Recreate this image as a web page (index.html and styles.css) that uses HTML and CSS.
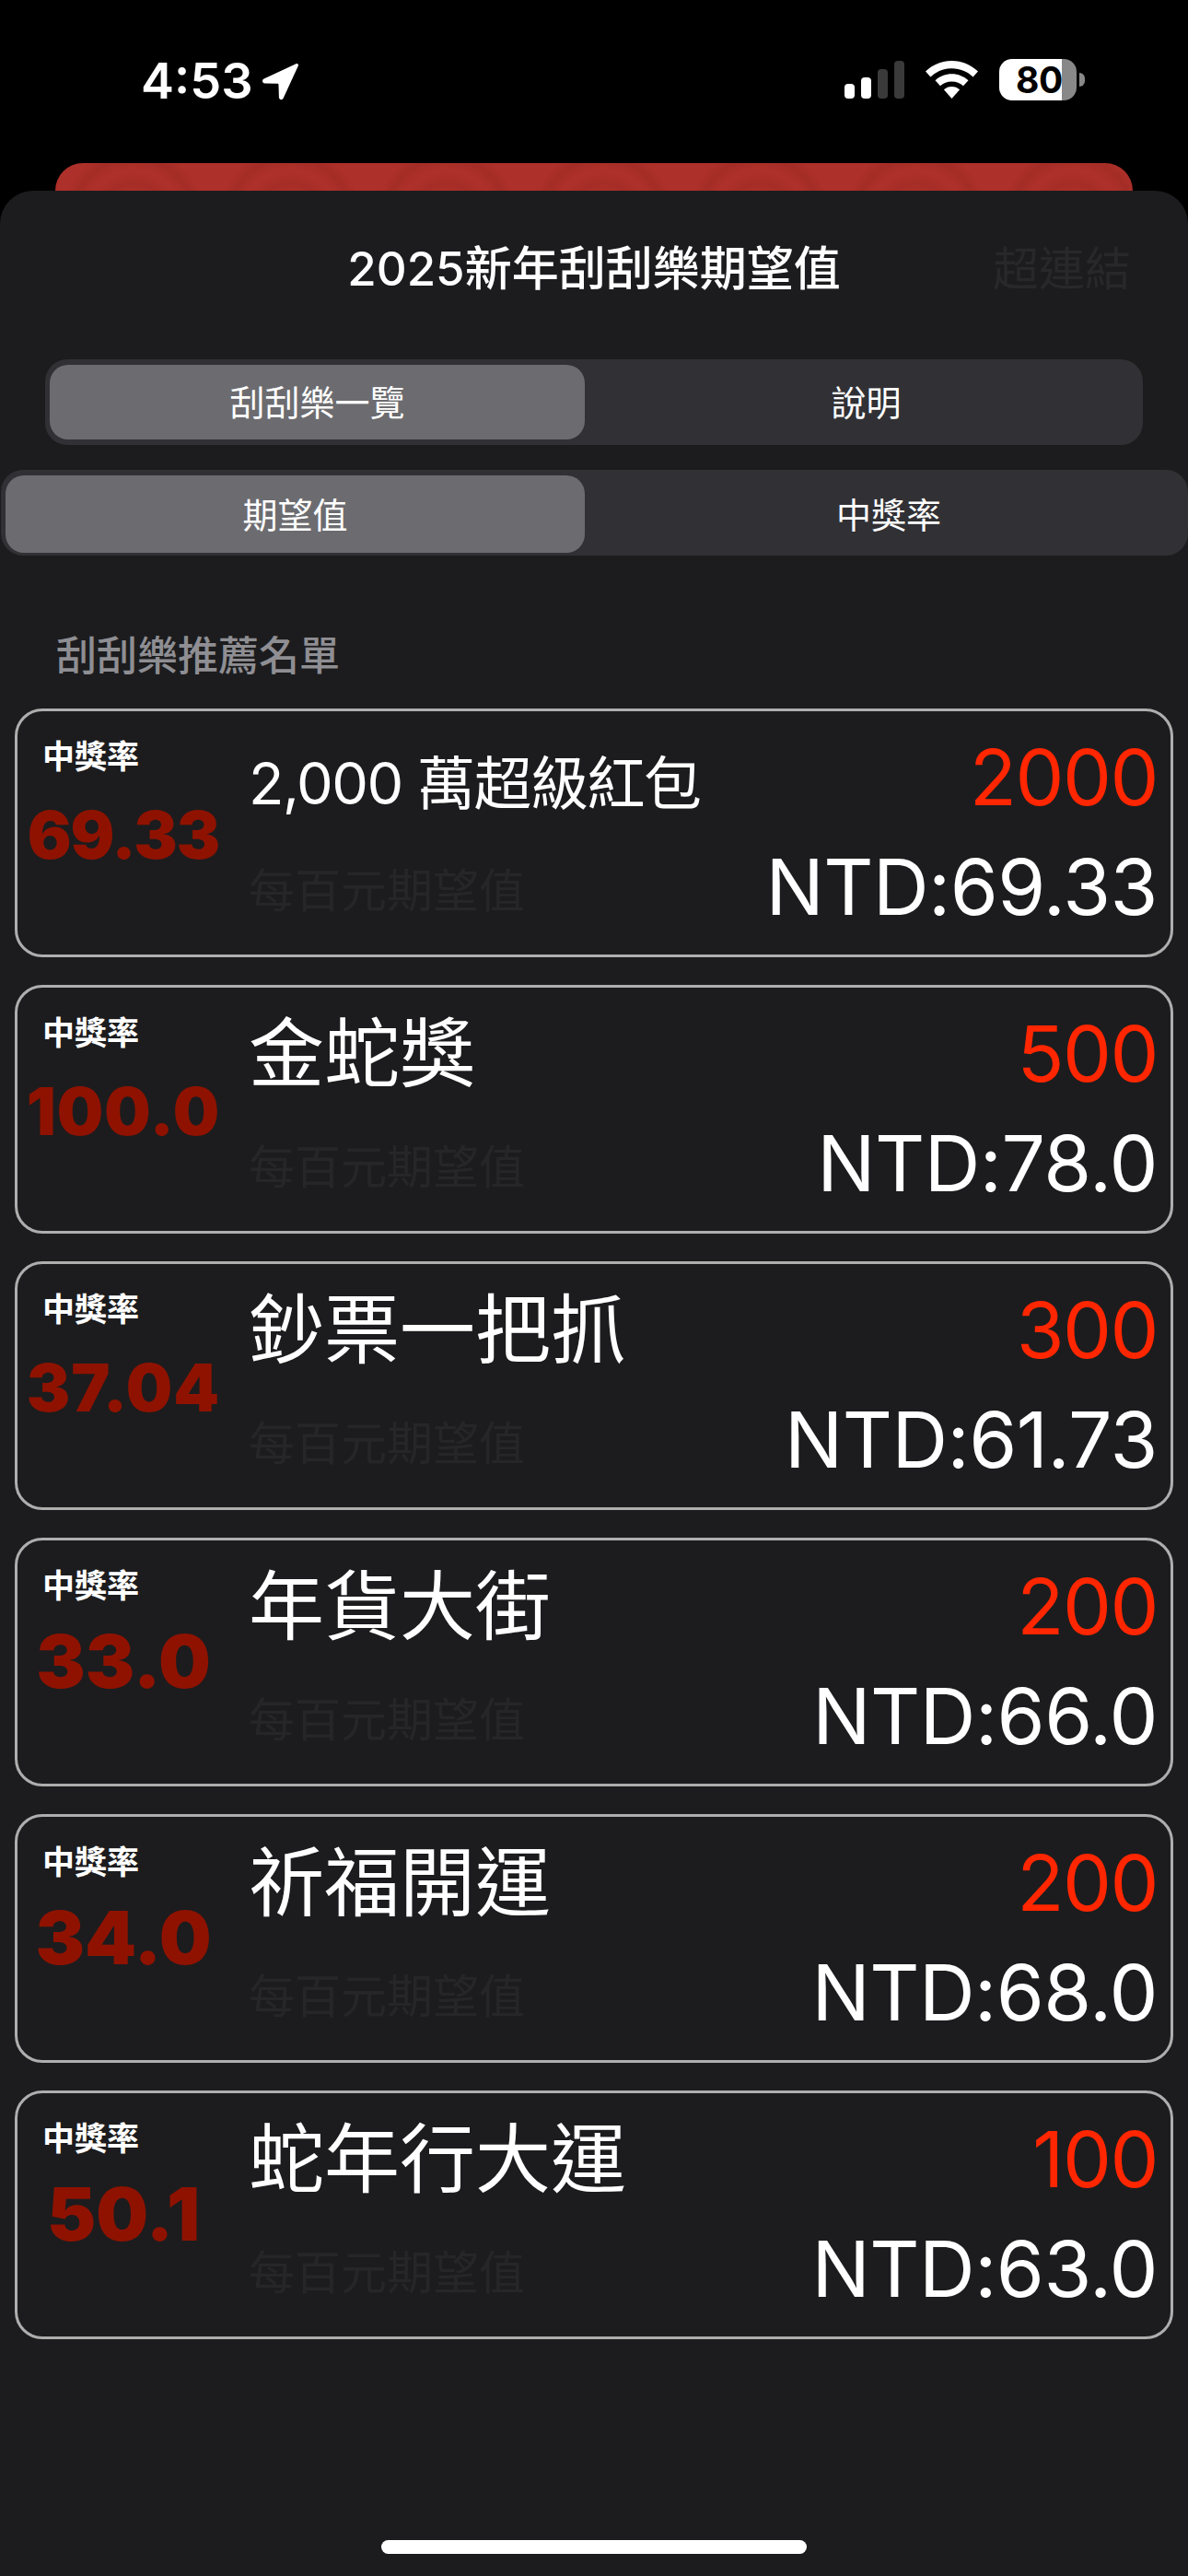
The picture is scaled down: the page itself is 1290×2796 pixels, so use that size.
FILE: index.html
```html
<!DOCTYPE html>
<html lang="zh-Hant">
<head>
  <meta charset="UTF-8">
  <meta name="viewport" content="width=device-width, initial-scale=1.0">
  <title>2025新年刮刮樂期望值</title>
  <link rel="stylesheet" href="styles.css">
</head>
<body>
  <div class="status-bar">
    <div class="status-left">
      <span class="time">4:53</span>
      <svg class="location" width="41" height="41" viewBox="0 0 41 41"><path d="M37.5 1.2 2.6 17.6c-2.6 1.300-1.800 4.800 1 4.900l13.600.3c.8 0 1.300.5 1.300 1.300l.4 13.500c.1 2.900 3.600 3.500 4.800 1L39.800 3.600c.7-1.600-.8-3.100-2.300-2.400z" fill="#fff"/></svg>
    </div>
    <div class="status-right">
      <div class="signal">
        <span class="bar bar-1"></span>
        <span class="bar bar-2"></span>
        <span class="bar bar-3 off"></span>
        <span class="bar bar-4 off"></span>
      </div>
      <svg class="wifi" width="57" height="41" viewBox="0 0 57 41"><path d="M28.500 0C17.500 0 7.700 4.300 0 11.500l5.400 6C11.500 11.800 19.500 8.300 28.500 8.300s17 3.500 23.100 9.200l5.400-6C49.300 4.300 39.500 0 28.500 0z" fill="#fff"/><path d="M28.500 14.200c-7 0-13.200 2.700-18 7l5.500 6.100c3.300-3 7.600-4.800 12.500-4.800s9.200 1.800 12.500 4.800l5.500-6.100c-4.800-4.300-11-7-18-7z" fill="#fff"/><path d="M28.500 28c-3.300 0-6.300 1.200-8.600 3.300L28.500 41l8.600-9.700C34.800 29.200 31.800 28 28.500 28z" fill="#fff"/></svg>
      <div class="battery">
        <div class="battery-body"><span class="battery-level">80</span></div>
        <span class="battery-nub"></span>
      </div>
    </div>
  </div>

  <div class="behind-card"></div>

  <div class="sheet">
    <div class="sheet-header">
      <span></span>
      <h1 class="sheet-title">2025新年刮刮樂期望值</h1>
      <span class="sheet-link">超連結</span>
    </div>

    <div class="segment segment-top">
      <div class="segment-item active">刮刮樂一覽</div>
      <div class="segment-item">說明</div>
    </div>

    <div class="segment segment-wide">
      <div class="segment-item active">期望值</div>
      <div class="segment-item">中獎率</div>
    </div>

    <div class="section-label">刮刮樂推薦名單</div>

    <div class="card-list">
      <div class="card">
        <div class="rate">
          <div class="rate-label">中獎率</div>
          <div class="rate-value">69.33</div>
        </div>
        <div class="info">
          <div class="name"><span class="name-small">2,000 萬超級紅包</span></div>
          <div class="hint">每百元期望值</div>
        </div>
        <div class="prices">
          <div class="price">2000</div>
          <div class="expect">NTD:69.33</div>
        </div>
      </div>

      <div class="card">
        <div class="rate">
          <div class="rate-label">中獎率</div>
          <div class="rate-value rate-spaced">100.0</div>
        </div>
        <div class="info">
          <div class="name">金蛇獎</div>
          <div class="hint">每百元期望值</div>
        </div>
        <div class="prices">
          <div class="price">500</div>
          <div class="expect">NTD:78.0</div>
        </div>
      </div>

      <div class="card">
        <div class="rate">
          <div class="rate-label">中獎率</div>
          <div class="rate-value rate-spaced">37.04</div>
        </div>
        <div class="info">
          <div class="name">鈔票一把抓</div>
          <div class="hint">每百元期望值</div>
        </div>
        <div class="prices">
          <div class="price">300</div>
          <div class="expect">NTD:61.73</div>
        </div>
      </div>

      <div class="card">
        <div class="rate">
          <div class="rate-label">中獎率</div>
          <div class="rate-value rate-big">33.0</div>
        </div>
        <div class="info">
          <div class="name">年貨大街</div>
          <div class="hint">每百元期望值</div>
        </div>
        <div class="prices">
          <div class="price">200</div>
          <div class="expect">NTD:66.0</div>
        </div>
      </div>

      <div class="card">
        <div class="rate">
          <div class="rate-label">中獎率</div>
          <div class="rate-value rate-big">34.0</div>
        </div>
        <div class="info">
          <div class="name">祈福開運</div>
          <div class="hint">每百元期望值</div>
        </div>
        <div class="prices">
          <div class="price">200</div>
          <div class="expect">NTD:68.0</div>
        </div>
      </div>

      <div class="card">
        <div class="rate">
          <div class="rate-label">中獎率</div>
          <div class="rate-value rate-big">50.1</div>
        </div>
        <div class="info">
          <div class="name">蛇年行大運</div>
          <div class="hint">每百元期望值</div>
        </div>
        <div class="prices">
          <div class="price">100</div>
          <div class="expect">NTD:63.0</div>
        </div>
      </div>
    </div>

    <div class="home-bar"></div>
  </div>
</body>
</html>
```

FILE: styles.css
```css
* {
  box-sizing: border-box;
}

html,
body {
  margin: 0;
  background-color: #000;
}

body {
  width: 1290px;
  height: 2796px;
  display: flex;
  flex-direction: column;
  overflow: hidden;
  color: #fff;
  font-family: Inter, "Noto Sans CJK TC", sans-serif;
}

/* status bar */
.status-bar {
  height: 177px;
  flex: none;
  display: flex;
  justify-content: space-between;
  padding: 64px 112px 0 153px;
}

.status-left {
  display: flex;
  align-items: flex-start;
  gap: 9px;
}

.time {
  font-size: 54px;
  font-weight: 600;
  line-height: 47px;
}

.location {
  margin-top: 4px;
}

.status-right {
  display: flex;
  align-items: flex-start;
}

.signal {
  display: flex;
  align-items: flex-end;
  gap: 7px;
  height: 41px;
  margin-top: 2px;
}

.bar {
  width: 11px;
  border-radius: 4px;
  background-color: #fff;
}

.bar-1 { height: 16px; }
.bar-2 { height: 23px; }
.bar-3 { height: 32px; }
.bar-4 { height: 41px; }

.bar.off {
  background-color: #3a3a3a;
}

.wifi {
  margin: 2px 0 0 23px;
}

.battery {
  display: flex;
  align-items: center;
  margin-left: 23px;
}

.battery-body {
  width: 84px;
  height: 45px;
  border-radius: 14px;
  background: linear-gradient(to right, #fff 68px, #888 68px);
  display: flex;
  align-items: center;
  padding-left: 18px;
}

.battery-level {
  font-size: 39px;
  font-weight: 700;
  line-height: 45px;
  color: #000;
  letter-spacing: -0.5px;
}

.battery-nub {
  width: 6px;
  height: 15px;
  margin-left: 3px;
  border-radius: 0 8px 8px 0;
  background-color: #888;
}

/* red card peeking out above the sheet */
.behind-card {
  height: 30px;
  flex: none;
  margin: 0 60px;
  border-radius: 30px 30px 0 0;
  background-color: #ae302a;
  background-image: radial-gradient(circle at 85px 60px, transparent 26px, rgba(90, 20, 10, 0.1) 38px, transparent 50px, transparent 54px, rgba(90, 20, 10, 0.12) 66px, transparent 78px);
  background-size: 170px 60px;
}

/* sheet */
.sheet {
  flex: 1;
  display: flex;
  flex-direction: column;
  border-radius: 36px 36px 0 0;
  background-color: #1c1c1e;
}

.sheet-header {
  display: grid;
  grid-template-columns: 1fr auto 1fr;
  align-items: center;
  height: 60px;
  margin-top: 55px;
  padding: 0 62px;
}

.sheet-title {
  margin: 0;
  font-size: 51px;
  font-weight: 500;
  line-height: 60px;
}

.sheet-link {
  justify-self: end;
  font-size: 50px;
  line-height: 60px;
  color: #28282a;
}

.segment {
  display: flex;
  padding: 6px 5px;
  background-color: #313135;
}

.segment-top {
  height: 93px;
  margin: 68px 49px 0;
  border-radius: 24px;
}

.segment-wide {
  height: 93px;
  margin: 27px 0 0 1px;
  padding-bottom: 3px;
  border-radius: 24px;
}

.segment-item {
  flex: 1;
  display: flex;
  align-items: center;
  justify-content: center;
  padding: 0 0 4px 10px;
  font-size: 38px;
  border-radius: 20px;
}

.segment-top .segment-item.active {
  flex: none;
  width: 581px;
  padding-left: 0;
}

.segment-wide .segment-item.active {
  flex: none;
  width: 629px;
  padding-left: 0;
}

.segment-item.active {
  background-color: #6c6c70;
}

.section-label {
  margin: 84px 0 0 61px;
  font-size: 44px;
  font-weight: 500;
  line-height: 50px;
  color: #8e8e93;
}

.card-list {
  display: flex;
  flex-direction: column;
  gap: 30px;
  margin: 32px 16px 0;
}

.card {
  height: 270px;
  display: flex;
  border: 3px solid #aeaeae;
  border-radius: 30px;
}

.rate {
  width: 251px;
  flex: none;
  display: flex;
  flex-direction: column;
  align-items: center;
  padding: 31px 21px 0 0;
}

.rate-label {
  width: 100%;
  padding-left: 27px;
  font-size: 35px;
  font-weight: 700;
  line-height: 36px;
}

.rate-value {
  height: 84px;
  margin-top: 25px;
  font-size: 71px;
  font-weight: 900;
  line-height: 84px;
  color: #8f1200;
  letter-spacing: -1px;
  white-space: nowrap;
}

.rate-spaced {
  letter-spacing: 1px;
}

.rate-big {
  margin-top: 22px;
  font-size: 80px;
  letter-spacing: 0;
}

.info {
  flex: 1;
  min-width: 0;
  display: flex;
  flex-direction: column;
}

.name {
  height: 113px;
  display: flex;
  align-items: flex-end;
  font-size: 82px;
  line-height: 1;
}

.name-small {
  margin-bottom: 3px;
  font-size: 63px;
  line-height: 1;
  letter-spacing: -1.5px;
}

.hint {
  margin-top: 57px;
  font-size: 50px;
  line-height: 50px;
  color: #262628;
}

.prices {
  display: flex;
  flex-direction: column;
  align-items: flex-end;
  padding: 22px 14px 0 0;
  gap: 19px;
}

.price,
.expect {
  height: 100px;
  font-size: 84px;
  line-height: 100px;
  white-space: nowrap;
}

.price {
  color: #ff2600;
  letter-spacing: -1.5px;
}

.expect {
  letter-spacing: -0.5px;
}

.home-bar {
  width: 462px;
  height: 15px;
  flex: none;
  margin: auto auto 24px;
  border-radius: 8px;
  background-color: #fff;
}
```
